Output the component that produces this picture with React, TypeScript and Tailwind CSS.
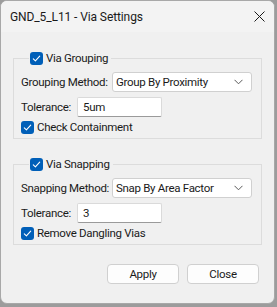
import React from "react";

function Check() {
  return (
    <span className="inline-flex w-[13px] h-[13px] rounded-[3px] bg-[#005fb8] items-center justify-center shrink-0">
      <svg width="9" height="9" viewBox="0 0 9 9">
        <path d="M1.3 4.8 L3.4 6.8 L7.7 2.2" fill="none" stroke="#fff" strokeWidth="1.1" strokeLinecap="round" strokeLinejoin="round" />
      </svg>
    </span>
  );
}

function Select({ value }: { value: string }) {
  return (
    <div className="w-[140px] h-[20px] bg-white border border-[#d0d0d0] rounded-[3px] flex items-center pl-[3px] pr-[8px] shrink-0">
      <span className="flex-1 whitespace-nowrap">{value}</span>
      <svg width="9" height="6" viewBox="0 0 9 6">
        <path d="M0.5 0.8 L4.5 4.8 L8.5 0.8" fill="none" stroke="#5a5a5a" strokeWidth="1" />
      </svg>
    </div>
  );
}

function Input({ value }: { value: string }) {
  return (
    <div className="w-[85px] h-[20px] bg-white border border-[#dadada] border-b-[#9a9a9a] rounded-[2px] flex items-center pl-[5px] shrink-0">
      {value}
    </div>
  );
}

function Group({
  title,
  method,
  methodLabel,
  tol,
  check,
}: {
  title: string;
  method: string;
  methodLabel: string;
  tol: string;
  check: string;
}) {
  return (
    <fieldset className="border border-[#dcdcdc] w-[249px] pl-[7px] pr-[9px] pt-[6px] pb-[5px]">
      <legend className="ml-[8px] px-[1px] flex items-center gap-[3px] h-[16px]">
        <Check />
        <span className="pr-[2px] whitespace-nowrap">{title}</span>
      </legend>
      <div className="flex items-center h-[20px]">
        <span className="w-[91px] whitespace-nowrap shrink-0">{methodLabel}</span>
        <Select value={method} />
      </div>
      <div className="flex items-center h-[20px] mt-[5px]">
        <span className="w-[56px] whitespace-nowrap shrink-0">Tolerance:</span>
        <Input value={tol} />
      </div>
      <div className="flex items-center gap-[3px] h-[12px] mt-[4px]">
        <Check />
        <span className="whitespace-nowrap">{check}</span>
      </div>
    </fieldset>
  );
}

export default function App() {
  return (
    <div
      className="w-[277px] h-[307px] bg-[#9c9c9c] text-[11.5px] tracking-[-0.3px] text-[#1a1a1a] leading-[16px]"
      style={{ fontFamily: 'Roboto, "Segoe UI", sans-serif' }}
    >
      <div className="w-[275px] h-[304px] bg-[#f0f0f0] rounded-[7px] border border-[#a8a8a8] overflow-hidden flex flex-col">
        <div className="h-[31px] bg-[#f3f3f3] flex items-center pl-[9px] pr-[9px] shrink-0">
          <span className="flex-1 text-[12px] tracking-[-0.1px] text-[#1a1a1a] whitespace-nowrap">GND_5_L11 - Via Settings</span>
          <svg width="11" height="11" viewBox="0 0 11 11">
            <path d="M0.5 0.5 L10.5 10.5 M10.5 0.5 L0.5 10.5" stroke="#1a1a1a" strokeWidth="1" />
          </svg>
        </div>
        <div className="pl-[12px] pt-[18px] flex flex-col">
          <Group
            title="Via Grouping"
            methodLabel="Grouping Method:"
            method="Group By Proximity"
            tol="5um"
            check="Check Containment"
          />
          <div className="h-[17px]" />
          <Group
            title="Via Snapping"
            methodLabel="Snapping Method:"
            method="Snap By Area Factor"
            tol="3"
            check="Remove Dangling Vias"
          />
          <div className="flex justify-end gap-[8px] pr-[15px] mt-[19px]">
            <button className="w-[72px] h-[20px] bg-[#fdfdfd] border border-[#d0d0d0] rounded-[4px]">
              Apply
            </button>
            <button className="w-[72px] h-[20px] bg-[#fdfdfd] border border-[#d0d0d0] rounded-[4px]">
              Close
            </button>
          </div>
        </div>
      </div>
    </div>
  );
}
